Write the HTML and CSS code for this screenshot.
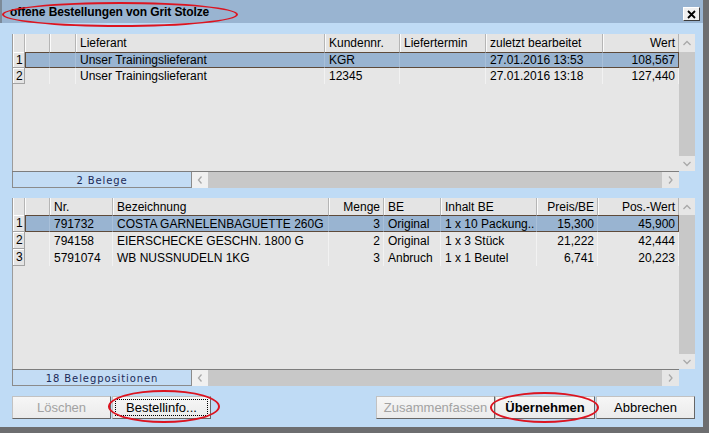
FILE: index.html
```html
<!doctype html>
<html>
  <head>
    <title>offene Bestellungen</title>
    <link rel="stylesheet" href="styles.css">
  </head>
  <body>
    <div class="window">
      <div class="titlebar">
        <span class="title">offene Bestellungen von Grit Stolze</span>
        <span class="close">
          <svg width="9" height="9" viewBox="0 0 9 9"><path d="M1 1 L8 8 M8 1 L1 8" stroke="#000" stroke-width="1.8" fill="none"/></svg>
        </span>
      </div>

      <div class="content">
        <!-- Belege -->
        <div class="panel orders">
          <div class="panel-main">
            <div class="grid">
              <div class="row head">
                <div class="c num"></div><div class="c"></div><div class="c"></div>
                <div class="c">Lieferant</div><div class="c">Kundennr.</div><div class="c">Liefertermin</div>
                <div class="c">zuletzt bearbeitet</div><div class="c r">Wert</div>
              </div>
              <div class="row sel">
                <div class="c num">1</div><div class="c"></div><div class="c"></div>
                <div class="c">Unser Trainingslieferant</div><div class="c">KGR</div><div class="c"></div>
                <div class="c">27.01.2016 13:53</div><div class="c r">108,567</div>
              </div>
              <div class="row">
                <div class="c num">2</div><div class="c"></div><div class="c"></div>
                <div class="c">Unser Trainingslieferant</div><div class="c">12345</div><div class="c"></div>
                <div class="c">27.01.2016 13:18</div><div class="c r">127,440</div>
              </div>
            </div>
            <div class="vscroll">
              <div class="sbtn up"><svg width="16" height="16" viewBox="0 0 16 16"><polyline points="4.5,10 8,6.5 11.5,10" fill="none" stroke="#a9a9a9" stroke-width="1.3"/></svg></div>
              <div class="sbtn down"><svg width="16" height="15" viewBox="0 0 16 15"><polyline points="4.5,6 8,9.5 11.5,6" fill="none" stroke="#a9a9a9" stroke-width="1.3"/></svg></div>
            </div>
          </div>
          <div class="hbar">
            <div class="label">2 Belege</div>
            <div class="arrow left"><svg width="16" height="16" viewBox="0 0 16 16"><polyline points="9.5,4.5 6.5,8 9.5,11.5" fill="none" stroke="#a9a9a9" stroke-width="1.3"/></svg></div>
            <div class="track"></div>
            <div class="arrow right"><svg width="17" height="16" viewBox="0 0 17 16"><polyline points="7,4.5 10,8 7,11.5" fill="none" stroke="#a9a9a9" stroke-width="1.3"/></svg></div>
          </div>
        </div>

        <!-- Belegpositionen -->
        <div class="panel items">
          <div class="panel-main">
            <div class="grid">
              <div class="row head">
                <div class="c num"></div><div class="c"></div>
                <div class="c">Nr.</div><div class="c">Bezeichnung</div><div class="c r">Menge</div>
                <div class="c">BE</div><div class="c">Inhalt BE</div><div class="c r">Preis/BE</div><div class="c r">Pos.-Wert</div>
              </div>
              <div class="row sel">
                <div class="c num">1</div><div class="c"></div>
                <div class="c">791732</div><div class="c">COSTA GARNELENBAGUETTE 260G</div><div class="c r">3</div>
                <div class="c">Original</div><div class="c">1 x 10 Packung..</div><div class="c r">15,300</div><div class="c r">45,900</div>
              </div>
              <div class="row">
                <div class="c num">2</div><div class="c"></div>
                <div class="c">794158</div><div class="c">EIERSCHECKE GESCHN. 1800 G</div><div class="c r">2</div>
                <div class="c">Original</div><div class="c">1 x 3 Stück</div><div class="c r">21,222</div><div class="c r">42,444</div>
              </div>
              <div class="row">
                <div class="c num">3</div><div class="c"></div>
                <div class="c">5791074</div><div class="c">WB NUSSNUDELN 1KG</div><div class="c r">3</div>
                <div class="c">Anbruch</div><div class="c">1 x 1 Beutel</div><div class="c r">6,741</div><div class="c r">20,223</div>
              </div>
            </div>
            <div class="vscroll">
              <div class="sbtn up"><svg width="16" height="16" viewBox="0 0 16 16"><polyline points="4.5,10 8,6.5 11.5,10" fill="none" stroke="#a9a9a9" stroke-width="1.3"/></svg></div>
              <div class="sbtn down"><svg width="16" height="15" viewBox="0 0 16 15"><polyline points="4.5,6 8,9.5 11.5,6" fill="none" stroke="#a9a9a9" stroke-width="1.3"/></svg></div>
            </div>
          </div>
          <div class="hbar">
            <div class="label">18 Belegpositionen</div>
            <div class="arrow left"><svg width="16" height="16" viewBox="0 0 16 16"><polyline points="9.5,4.5 6.5,8 9.5,11.5" fill="none" stroke="#a9a9a9" stroke-width="1.3"/></svg></div>
            <div class="track"></div>
            <div class="arrow right"><svg width="17" height="16" viewBox="0 0 17 16"><polyline points="7,4.5 10,8 7,11.5" fill="none" stroke="#a9a9a9" stroke-width="1.3"/></svg></div>
          </div>
        </div>

        <div class="buttons">
          <button class="btn" disabled>Löschen</button>
          <button class="btn focus">Bestellinfo...</button>
          <div class="spacer"></div>
          <button class="btn wide" disabled>Zusammenfassen</button>
          <button class="btn default">Übernehmen</button>
          <button class="btn">Abbrechen</button>
        </div>
      </div>

      <div class="mark mark-title"></div>
      <div class="mark mark-info"></div>
      <div class="mark mark-take"></div>
    </div>
  </body>
</html>
```

FILE: styles.css
```css
body {
  margin: 0;
  font-family: "Liberation Sans", Arial, sans-serif;
  font-size: 12px;
  color: #000;
}
.window {
  position: relative;
  width: 709px;
  height: 433px;
  box-sizing: border-box;
  background: #bfdbf5;
  border-right: 6px solid #6d6e70;
  border-bottom: 6px solid #6d6e70;
  display: flex;
  flex-direction: column;
}
.titlebar {
  height: 23px;
  box-sizing: border-box;
  background: #99b4d1;
  border-left: 2px solid #7c8a99;
  display: flex;
  align-items: center;
  padding-left: 8px;
}
.title {
  font-weight: bold;
  font-size: 12px;
  letter-spacing: -0.1px;
}
.close {
  align-self: flex-start;
  margin: 7px 3px 0 auto;
  width: 17px;
  height: 14px;
  box-sizing: border-box;
  background: #f0f0f0;
  border: 1px solid;
  border-color: #fff #3c3c3c #3c3c3c #fff;
  display: flex;
  align-items: center;
  justify-content: center;
}
.content {
  flex: 1;
  padding: 11px 8px 8px 12px;
  display: flex;
  flex-direction: column;
  gap: 10px;
}

/* grids */
.panel {
  display: flex;
  flex-direction: column;
}
.panel-main {
  display: flex;
}
.orders .panel-main {
  height: 137px;
}
.items .panel-main {
  height: 171px;
}
.grid {
  flex: 1;
  background: #e6e6e6;
  border-left: 1px solid #9c9c9c;
  overflow: hidden;
}
.row {
  display: grid;
  height: 16px;
}
.orders .row {
  grid-template-columns: 12px 25px 26px 249px 75px 86px 117px 76px;
}
.items .row {
  grid-template-columns: 12px 25px 63px 216px 55px 57px 96px 61px 81px;
  height: 17px;
}
.row.head {
  height: 18px;
}
.items .row.head {
  height: 17px;
}
.c {
  box-sizing: border-box;
  padding: 0 4px;
  white-space: nowrap;
  overflow: hidden;
  display: flex;
  align-items: center;
  border-right: 1px solid #f2f2f2;
}
.c.r {
  justify-content: flex-end;
  padding-right: 3px;
}
.c.num {
  padding: 0 0 0 3px;
  background: #e4e4e4;
  border-right: 1px solid #a3a3a3;
  border-bottom: 1px solid #a3a3a3;
  box-shadow: inset 1px 1px #fff;
}
.head .c {
  background: #e4e4e4;
  border-right: 1px solid #b5b5b5;
  box-shadow: inset 1px 0 #fbfbfb;
}
.head .c.num {
  border-bottom: 0;
}
.sel .c {
  background: #99b4d1;
  border-top: 1px solid #5e4a3a;
  border-bottom: 1px solid #5e4a3a;
  border-right-color: #a9c0d9;
}
.sel .c.num {
  background: #e4e4e4;
  border-top: 0;
  border-bottom: 1px solid #a3a3a3;
  border-right-color: #a3a3a3;
}
.sel .c:nth-child(2) {
  border-left: 1px solid #5e4a3a;
}
.sel .c:last-child {
  border-right: 1px solid #5e4a3a;
}

.vscroll {
  width: 16px;
  background: #c8c8c8;
  display: flex;
  flex-direction: column;
  justify-content: space-between;
}
.sbtn {
  background: #e6e6e6;
  display: flex;
}
.sbtn.up {
  height: 18px;
  align-items: center;
}
.items .sbtn.up {
  height: 17px;
}
.sbtn.down {
  height: 15px;
}

.hbar {
  height: 17px;
  box-sizing: border-box;
  margin-right: 16px;
  border-top: 1px solid #7d7d7d;
  display: flex;
}
.hbar .label {
  width: 180px;
  box-sizing: border-box;
  background: #c3dcf4;
  border: 1px solid #8b8b8b;
  border-top: 0;
  font-family: "DejaVu Sans", Tahoma, sans-serif;
  font-size: 10px;
  letter-spacing: 0.9px;
  color: #1b2a58;
  display: flex;
  align-items: center;
  justify-content: center;
  padding-top: 1px;
}
.hbar .arrow {
  width: 16px;
  background: #f0f0f0;
  display: flex;
}
.hbar .arrow.right {
  width: 17px;
  background: #e6e6e6;
}
.hbar .track {
  flex: 1;
  background: #c8c8c8;
}

/* buttons */
.buttons {
  display: flex;
  height: 23px;
  gap: 1px;
}
.spacer {
  flex: 1;
}
.btn {
  width: 99px;
  height: 23px;
  box-sizing: border-box;
  padding: 0;
  background: linear-gradient(#f6f6f6, #ebebeb);
  border: 1px solid;
  border-color: #c2c2c2 #666 #666 #c2c2c2;
  font-family: "Liberation Sans", Arial, sans-serif;
  font-size: 13px;
  color: #000;
}
.btn:disabled {
  color: #a2a2a2;
}
.btn.wide {
  width: 119px;
  margin-right: -1px;
}
.btn.default {
  width: 100px;
  font-weight: bold;
}
.btn.focus {
  outline: 1px dotted #000;
  outline-offset: -4px;
}

/* red annotation rings */
.mark {
  position: absolute;
  box-sizing: border-box;
  border: 2px solid #dc1420;
  border-radius: 50%;
  pointer-events: none;
}
.mark-title {
  left: 2px;
  top: 2px;
  width: 236px;
  height: 25px;
}
.mark-info {
  left: 108px;
  top: 390px;
  width: 112px;
  height: 33px;
}
.mark-take {
  left: 490px;
  top: 392px;
  width: 109px;
  height: 31px;
}
```
